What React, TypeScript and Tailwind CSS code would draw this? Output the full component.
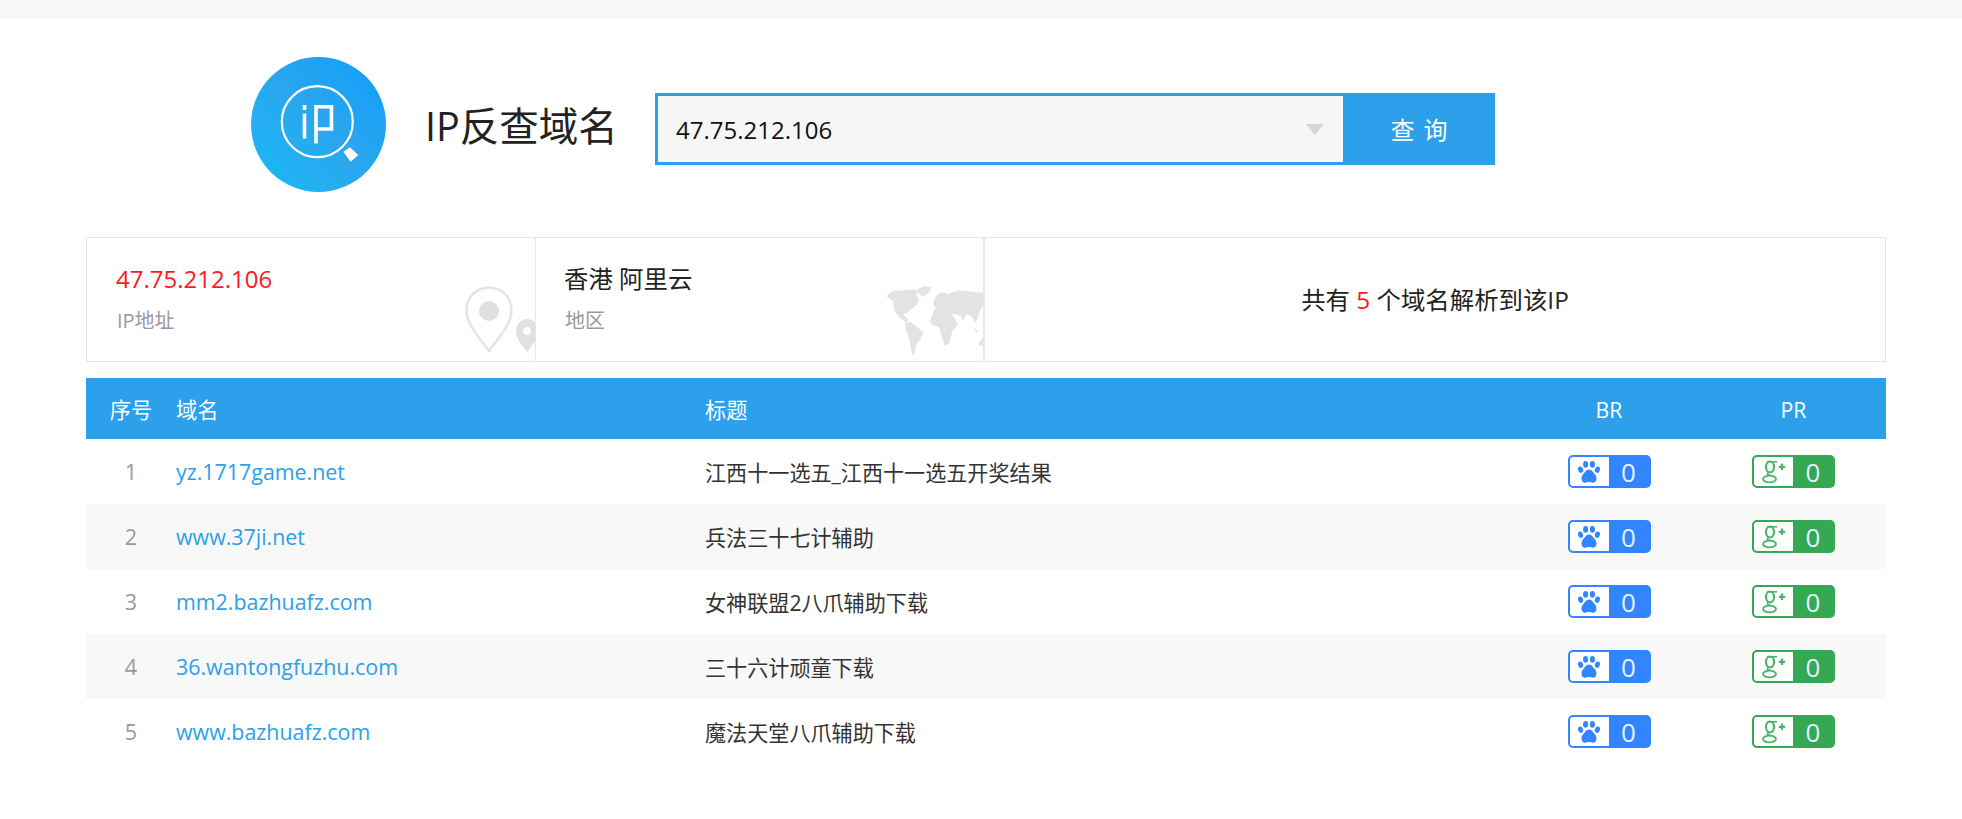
import React from 'react';

const ROWS = [
  { id: 1, domain: 'yz.1717game.net', title: '江西十一选五_江西十一选五开奖结果' },
  { id: 2, domain: 'www.37ji.net', title: '兵法三十七计辅助' },
  { id: 3, domain: 'mm2.bazhuafz.com', title: '女神联盟2八爪辅助下载' },
  { id: 4, domain: '36.wantongfuzhu.com', title: '三十六计顽童下载' },
  { id: 5, domain: 'www.bazhuafz.com', title: '魔法天堂八爪辅助下载' },
];

const Logo = () => (
  <div className="w-[135px] h-[135px] shrink-0 rounded-full bg-linear-to-tr from-[#14baf5] via-[#2aa7ee] to-[#0a9dfb]">
    <svg width="135" height="135" viewBox="0 0 135 135" fill="none" stroke="#fff">
      <circle cx="66.3" cy="64.7" r="35.5" strokeWidth="2.2" />
      <path d="M53.5 56.5V81.5M53.5 48V53M65 86.5V49.7H80.5V72H65" strokeWidth="3.6" />
      <path d="M92.3 94.7L99 90.3L107.3 98L99.7 104.7Z" fill="#fff" stroke="none" />
    </svg>
  </div>
);

const Pins = () => (
  <svg className="absolute right-0 bottom-[8px]" width="70" height="67" viewBox="0 0 70 67" fill="none">
    <path d="M24 65C12 49 1.5 38 1.5 24C1.5 11 11.5 1.5 24 1.5C36.5 1.5 46.5 11 46.5 24C46.5 38 36 49 24 65Z" stroke="#e4e4e4" strokeWidth="2.5" />
    <circle cx="24" cy="25" r="10" fill="#e0e0e0" />
    <path fillRule="evenodd" d="M62 66C56 58 51 52 51 45C51 38 56 33 62 33C68 33 73 38 73 45C73 52 68 58 62 66ZM62 49A4 4 0 1 0 62 41A4 4 0 1 0 62 49Z" fill="#e0e0e0" />
  </svg>
);

const WorldMap = () => (
  <svg className="absolute right-0 bottom-0" width="100" height="80" viewBox="0 0 300 240" fill="#e3e3e3">
    <path d="M10 45L30 30L60 28L90 25L105 32L100 40L108 58L100 72L85 85L72 95L60 100L78 118L68 124L48 108L35 90L30 60L18 52Z" />
    <path d="M100 28L120 16L148 18L135 38L118 48L110 40Z" />
    <path d="M66 125L85 123L105 140L122 155L112 175L100 190L92 225L85 210L78 170L68 145Z" />
    <path d="M150 65L158 48L170 35L185 35L195 40L225 28L300 35L300 75L290 90L285 110L275 125L265 105L250 100L240 120L232 105L215 100L190 95L165 88L155 78Z" />
    <path d="M140 122L155 85L195 90L215 110L225 130L208 150L200 185L185 195L175 160L168 138L148 132Z" />
    <path d="M270 140L285 150L280 155Z" />
    <path d="M300 170L285 190L300 195Z" />
  </svg>
);

const Paw = () => (
  <svg width="24" height="26" viewBox="0 0 24 24" fill="#3385ff">
    <ellipse cx="3.6" cy="9.7" rx="2.5" ry="3.2" transform="rotate(-15 3.6 9.7)" />
    <ellipse cx="8.6" cy="4.4" rx="2.5" ry="3.3" />
    <ellipse cx="15.4" cy="4.4" rx="2.5" ry="3.3" />
    <ellipse cx="20.4" cy="9.7" rx="2.5" ry="3.2" transform="rotate(15 20.4 9.7)" />
    <path d="M12 9.6C15 9.6 16 12.5 18 14.5C20.5 17 20 22.7 16 22.7C14.5 22.7 13.5 22 12 22C10.5 22 9.5 22.7 8 22.7C4 22.7 3.5 17 6 14.5C8 12.5 9 9.6 12 9.6Z" />
  </svg>
);

const GooglePlus = () => (
  <svg width="27" height="25" viewBox="0 0 27 25" fill="none" stroke="#4cb36a">
    <ellipse cx="10" cy="8" rx="4" ry="5.5" strokeWidth="2.2" />
    <path d="M7 2.8H17" strokeWidth="1.6" />
    <path d="M8 13.5C6.5 15 8 16 10.5 16.5" strokeWidth="1.6" />
    <ellipse cx="9.5" cy="20" rx="6.5" ry="3.4" strokeWidth="1.8" />
    <path d="M22 4.5V11M18.8 7.8H25.2" strokeWidth="2.2" />
  </svg>
);

const Badge = ({ kind }: { kind: 'br' | 'pr' }) => {
  const isBr = kind === 'br';
  return (
    <div className={`flex h-[33px] w-[83px] rounded-[5px] border-2 ${isBr ? 'border-[#3385ff] bg-[#3385ff]' : 'border-[#34a853] bg-[#34a853]'}`}>
      <div className="flex w-[39px] shrink-0 items-center justify-center rounded-l-[3px] bg-white">
        {isBr ? <Paw /> : <GooglePlus />}
      </div>
      <div className="flex flex-1 items-center justify-center text-[26px] leading-none text-[#e6f0ff]">0</div>
    </div>
  );
};

const GRID = 'grid grid-cols-[90px_530px_811px_184px_185px] items-center';

export default function App() {
  return (
    <div className="min-h-[819px] bg-white font-['Open_Sans','Noto_Sans_CJK_SC',sans-serif] text-[#222]">
      <div className="h-[19px] bg-[#f8f8f8]" />

      <div className="flex items-center pl-[251px] pt-[38px]">
        <Logo />
        <h1 className="ml-[39px] mt-[5px] w-[189px] whitespace-nowrap text-[39.5px] leading-none font-normal">IP反查域名</h1>
        <div className="ml-[41px] mt-[9px] flex h-[72px] w-[840px] border-[3px] border-[#2ca0ea]">
          <div className="flex flex-1 items-center bg-[#f6f6f6] pl-[18px] pr-[19px]">
            <input readOnly value="47.75.212.106" className="min-w-0 flex-1 bg-transparent pt-[2px] text-[24px] text-[#111] outline-none" />
            <div className="h-0 w-0 border-x-[9px] border-t-[11px] border-x-transparent border-t-[#d6d6d6]" />
          </div>
          <button className="w-[149px] bg-[#2ca0ea] pl-[12px] pt-[2px] text-[24px] tracking-[9px] text-white">查询</button>
        </div>
      </div>

      <div className="ml-[86px] mt-[45px] flex h-[125px] w-[1800px] border border-[#e6e6e6]">
        <div className="relative w-[448px] shrink-0 overflow-hidden pl-[29px] pt-[23px]">
          <div className="text-[24px] leading-[36px] text-[#ff1a1a]">47.75.212.106</div>
          <div className="ml-px mt-[9px] text-[20px] leading-[30px] text-[#999]">IP地址</div>
          <Pins />
        </div>
        <div className="relative w-[448px] shrink-0 overflow-hidden border-l border-[#e6e6e6] pl-[28px] pt-[23px]">
          <div className="text-[24.4px] leading-[36px]">香港 阿里云</div>
          <div className="ml-px mt-[9px] text-[20px] leading-[30px] text-[#999]">地区</div>
          <WorldMap />
        </div>
        <div className="flex flex-1 items-center justify-center border-l-2 border-[#e6e6e6] pt-[2px] text-[24.4px]">
          <span>共有 <span className="text-[#ff1a1a]">5</span> 个域名解析到该IP</span>
        </div>
      </div>

      <div className="ml-[86px] mt-4 w-[1800px]">
        <div className={`${GRID} h-[61px] bg-[#2ca0ea] pt-[2px] text-[21.2px] text-white`}>
          <div className="text-center">序号</div>
          <div>域名</div>
          <div className="-ml-px">标题</div>
          <div className="text-center">BR</div>
          <div className="text-center">PR</div>
        </div>
        {ROWS.map((row) => (
          <div key={row.id} className={`${GRID} h-[65px] ${row.id % 2 === 0 ? 'bg-[#f8f8f8]' : 'bg-white'}`}>
            <div className="pt-px text-center text-[21.6px] text-[#999]">{row.id}</div>
            <div className="pt-px text-[21.4px] text-[#2ca0ea]">{row.domain}</div>
            <div className="-ml-px pt-[2px] text-[21.1px] text-[#333]">{row.title}</div>
            <div className="flex justify-center"><Badge kind="br" /></div>
            <div className="flex justify-center"><Badge kind="pr" /></div>
          </div>
        ))}
      </div>
    </div>
  );
}
